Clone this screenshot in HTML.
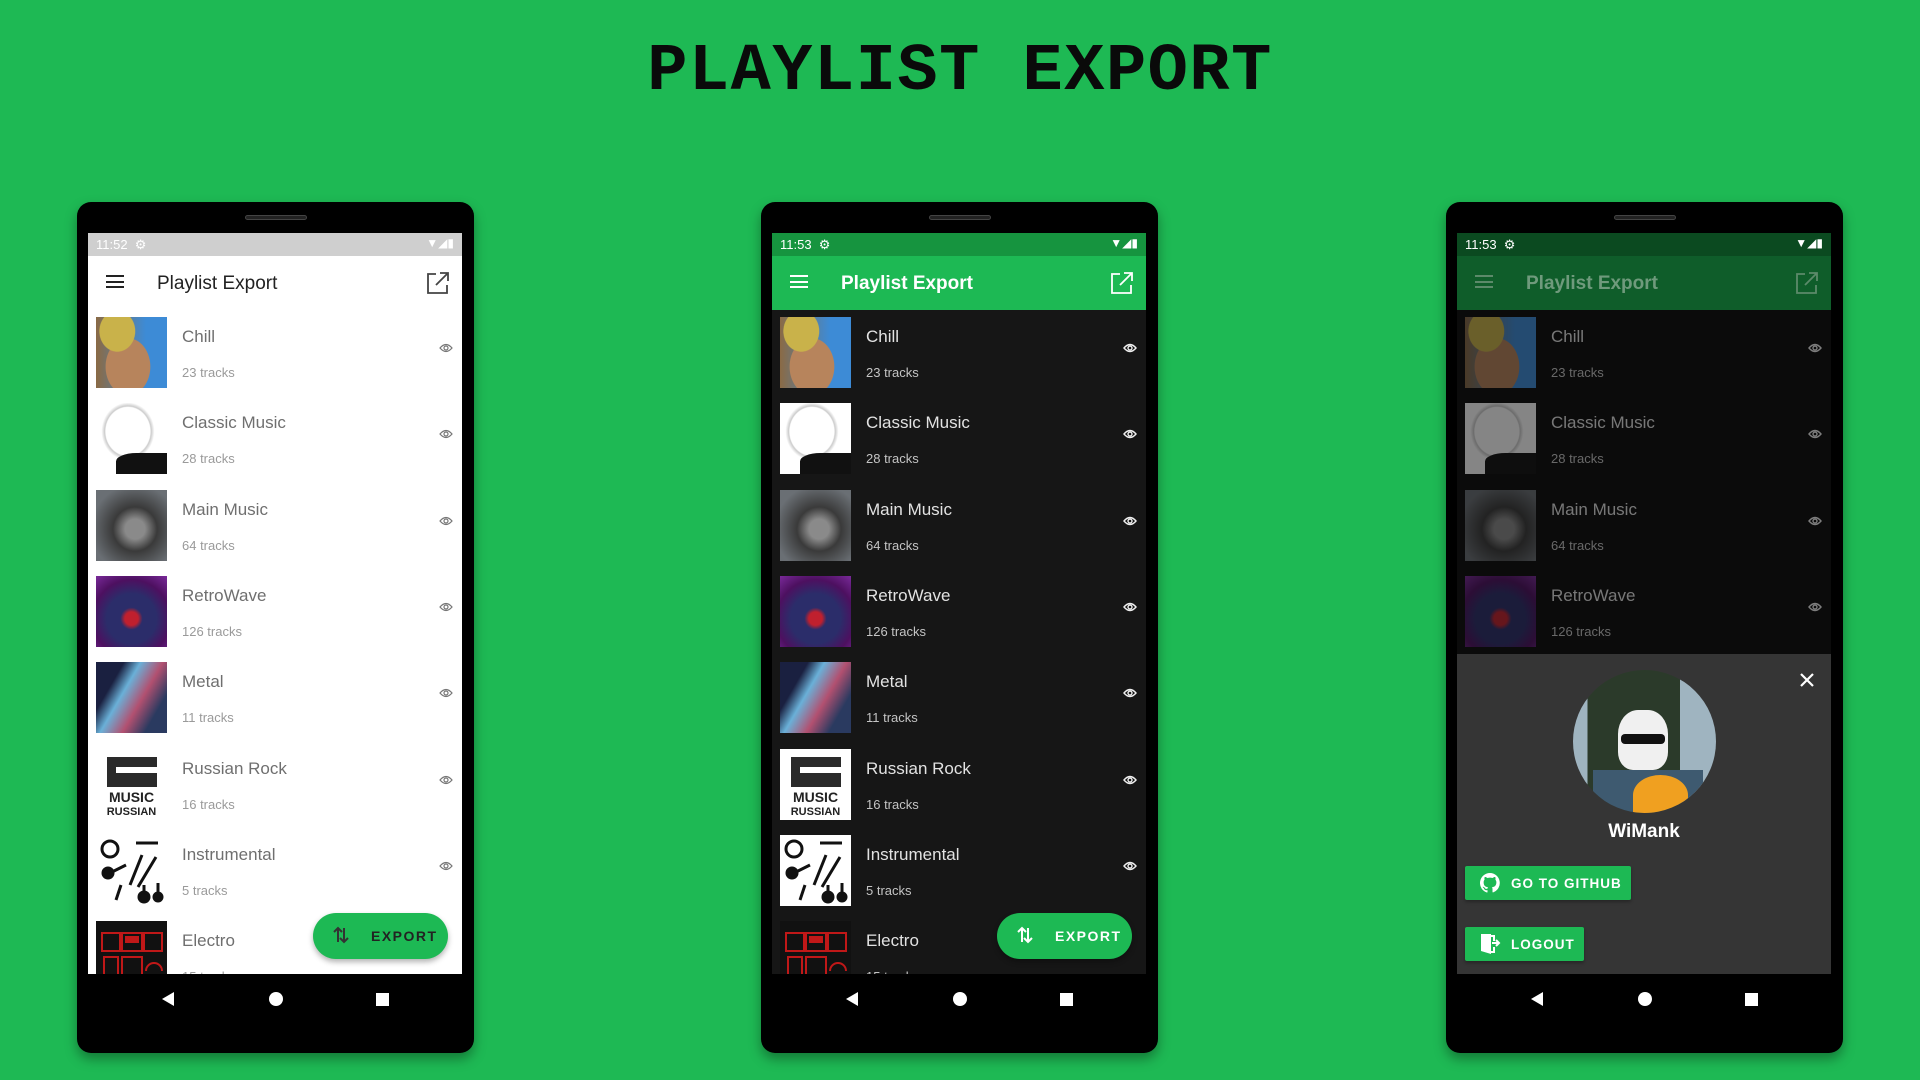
<!DOCTYPE html>
<html><head><meta charset="utf-8"><style>
*{margin:0;padding:0;box-sizing:border-box}
body{width:1920px;height:1080px;background:#1eb954;position:relative;overflow:hidden;font-family:"Liberation Sans",Roboto,sans-serif}
h1{position:absolute;left:0;width:1920px;top:34px;text-align:center;font-family:"Liberation Mono",monospace;font-weight:bold;font-size:67px;color:#0a0a0a;letter-spacing:1.5px}
.ph{position:absolute;top:202px;width:397px;height:851px;background:#000;border-radius:14px;box-shadow:0 6px 12px rgba(0,0,0,.35)}
.spk{position:absolute;left:168px;top:13px;width:62px;height:5px;border-radius:3px;background:#222;border:1px solid #444}
.scr{position:absolute;left:11px;top:31px;width:374px;height:741px;overflow:hidden}
.sb{position:absolute;left:0;top:0;width:374px;height:23px;font-size:13px;color:#fff;padding:4px 8px}
.sb .r{position:absolute;right:8px;top:3px;font-size:12px}
.ab{position:absolute;left:0;top:23px;width:374px;height:54px}
.ab .t{position:absolute;left:69px;top:17px;font-size:19px}
.ham{position:absolute;left:18px;top:19px;width:18px;height:13px;border-top:2px solid;border-bottom:2px solid}
.ham:after{content:"";position:absolute;left:0;top:3.5px;width:18px;border-top:2px solid}
.ex{position:absolute;left:338px;top:15px}
.list{position:absolute;left:0;top:77px;width:374px;height:664px}
.row{position:absolute;left:8px;width:360px;height:71px}
.th{position:absolute;left:0;top:0;width:71px;height:71px;overflow:hidden}
.ti{position:absolute;left:86px;top:10px;font-size:17px}
.tr{position:absolute;left:86px;top:48px;font-size:13px}
.eye{position:absolute;left:343px;top:26px}
.nav{position:absolute;left:11px;top:772px;width:374px;height:48px}
.fab{position:absolute;left:225px;top:680px;width:135px;height:46px;border-radius:23px;background:#1db954;color:#fff;font-weight:bold;font-size:14px;letter-spacing:1.5px;box-shadow:0 3px 6px rgba(0,0,0,.3)}
.fab span{position:absolute;left:58px;top:15px}
.fab svg{position:absolute;left:20px;top:13px}
.light .list{background:#fff}.light .ti{color:#6f6f6f}.light .tr{color:#9a9a9a}
.dark .list{background:#161616}.dark .ti{color:#e2e2e2}.dark .tr{color:#c4c4c4}
.t1{background:radial-gradient(ellipse at 30% 20%,#c9b24a 0 25%,transparent 26%),radial-gradient(ellipse at 45% 70%,#b7845c 0 40%,transparent 41%),linear-gradient(90deg,#8a6a45,#3d8bd6 70%)}
.t2b{background:radial-gradient(ellipse at 45% 40%,#fff 0 40%,#ccc 42%,#fff 48%),linear-gradient(#fff,#fff)}
.t2b:after{content:"";position:absolute;left:20px;top:50px;width:51px;height:21px;background:#111;border-radius:40% 0 0 0}
.t3{background:radial-gradient(circle at 55% 55%,#8a8a8a 0 18%,#3a3a3a 40%,#6a6f74 80%)}
.t4{background:radial-gradient(circle at 50% 60%,#c0202e 0 12%,#2b2d6a 20% 45%,#4d1060 70%,#7a2a9a)}
.t5{background:linear-gradient(120deg,#1a2040 0 25%,#6ab0d8 40%,#b25070 60%,#2a3a60 80%)}
.t6{background:#fff}
.t7{background:#fff}
.t8{background:#111}
</style></head><body>
<h1>PLAYLIST EXPORT</h1>

<div class="ph light" style="left:77px"><div class="spk"></div>
<div class="scr">
<div class="sb" style="background:#cfcfcf">11:52 &nbsp;⚙<span class="r">▼◢▮</span></div>
<div class="ab" style="background:#fff;color:#222"><div class="ham"></div><div class="t">Playlist Export</div>
<svg class="ex" width="24" height="24" viewBox="0 0 24 24" fill="none" stroke="#444" stroke-width="1.8"><path d="M10 3H2v19h19v-8M14 2h8v8M22 2 10 14"/></svg></div>
<div class="list">
<div class="row" style="top:7px"><div class="th t1"></div><div class="ti">Chill</div><div class="tr">23 tracks</div><svg class="eye" width="14" height="10" viewBox="0 0 14 10" fill="none" stroke="#777" stroke-width="1.2"><path d="M1 5Q7-2 13 5Q7 12 1 5Z"/><circle cx="7" cy="5" r="2"/></svg></div>
<div class="row" style="top:93px"><div class="th t2b"></div><div class="ti">Classic Music</div><div class="tr">28 tracks</div><svg class="eye" width="14" height="10" viewBox="0 0 14 10" fill="none" stroke="#777" stroke-width="1.2"><path d="M1 5Q7-2 13 5Q7 12 1 5Z"/><circle cx="7" cy="5" r="2"/></svg></div>
<div class="row" style="top:180px"><div class="th t3"></div><div class="ti">Main Music</div><div class="tr">64 tracks</div><svg class="eye" width="14" height="10" viewBox="0 0 14 10" fill="none" stroke="#777" stroke-width="1.2"><path d="M1 5Q7-2 13 5Q7 12 1 5Z"/><circle cx="7" cy="5" r="2"/></svg></div>
<div class="row" style="top:266px"><div class="th t4"></div><div class="ti">RetroWave</div><div class="tr">126 tracks</div><svg class="eye" width="14" height="10" viewBox="0 0 14 10" fill="none" stroke="#777" stroke-width="1.2"><path d="M1 5Q7-2 13 5Q7 12 1 5Z"/><circle cx="7" cy="5" r="2"/></svg></div>
<div class="row" style="top:352px"><div class="th t5"></div><div class="ti">Metal</div><div class="tr">11 tracks</div><svg class="eye" width="14" height="10" viewBox="0 0 14 10" fill="none" stroke="#777" stroke-width="1.2"><path d="M1 5Q7-2 13 5Q7 12 1 5Z"/><circle cx="7" cy="5" r="2"/></svg></div>
<div class="row" style="top:439px"><div class="th t6"><div style="position:absolute;left:11px;top:8px;width:50px;height:30px;background:#2a2a2a"></div><div style="position:absolute;left:20px;top:18px;width:41px;height:6px;background:#fff"></div><div style="position:absolute;left:0;top:42px;width:71px;text-align:center;font-weight:bold;font-size:14px;line-height:13px;color:#222">MUSIC<br><span style="font-size:11px">RUSSIAN</span></div></div><div class="ti">Russian Rock</div><div class="tr">16 tracks</div><svg class="eye" width="14" height="10" viewBox="0 0 14 10" fill="none" stroke="#777" stroke-width="1.2"><path d="M1 5Q7-2 13 5Q7 12 1 5Z"/><circle cx="7" cy="5" r="2"/></svg></div>
<div class="row" style="top:525px"><div class="th t7"><svg width="71" height="71" stroke="#111" stroke-width="3" fill="#111"><circle cx="14" cy="14" r="8" fill="none"/><path d="M40 8h22M10 40l20-10M46 20l-12 30M60 22L42 52M25 50l-5 15M48 50v18M62 48v18"/><circle cx="12" cy="38" r="5"/><circle cx="48" cy="62" r="5"/><circle cx="62" cy="62" r="4"/></svg></div><div class="ti">Instrumental</div><div class="tr">5 tracks</div><svg class="eye" width="14" height="10" viewBox="0 0 14 10" fill="none" stroke="#777" stroke-width="1.2"><path d="M1 5Q7-2 13 5Q7 12 1 5Z"/><circle cx="7" cy="5" r="2"/></svg></div>
<div class="row" style="top:611px"><div class="th t8"><svg width="71" height="71" fill="none" stroke="#c01818" stroke-width="2"><rect x="6" y="12" width="18" height="18"/><rect x="26" y="12" width="20" height="18"/><rect x="48" y="12" width="18" height="18"/><rect x="8" y="36" width="14" height="22"/><rect x="26" y="36" width="20" height="18"/><path d="M50 50a8 8 0 0116 0"/><rect x="30" y="16" width="12" height="5" fill="#c01818"/></svg></div><div class="ti">Electro</div><div class="tr">15 tracks</div></div>
</div>
<div class="fab"><svg width="16" height="18" fill="none" stroke="#333" stroke-width="2"><path d="M5 16V2M1 6l4-4 4 4M11 2v14M7 12l4 4 4-4"/></svg><span style="color:#222">EXPORT</span></div>
</div>
<div class="nav"><svg width="374" height="48" fill="#fff"><path d="M86 18v14l-12-7z"/><circle cx="188" cy="25" r="7"/><rect x="288" y="19" width="13" height="13"/></svg></div>
</div>

<div class="ph dark" style="left:761px"><div class="spk"></div>
<div class="scr">
<div class="sb" style="background:#16943f">11:53 &nbsp;⚙<span class="r">▼◢▮</span></div>
<div class="ab" style="background:#1db954;color:#fff"><div class="ham"></div><div class="t" style="font-weight:bold">Playlist Export</div>
<svg class="ex" width="24" height="24" viewBox="0 0 24 24" fill="none" stroke="#fff" stroke-width="1.8"><path d="M10 3H2v19h19v-8M14 2h8v8M22 2 10 14"/></svg></div>
<div class="list">
<div class="row" style="top:7px"><div class="th t1"></div><div class="ti">Chill</div><div class="tr">23 tracks</div><svg class="eye" width="14" height="10" viewBox="0 0 14 10" fill="none" stroke="#eee" stroke-width="1.4"><path d="M1 5Q7-2 13 5Q7 12 1 5Z"/><circle cx="7" cy="5" r="2"/></svg></div>
<div class="row" style="top:93px"><div class="th t2b"></div><div class="ti">Classic Music</div><div class="tr">28 tracks</div><svg class="eye" width="14" height="10" viewBox="0 0 14 10" fill="none" stroke="#eee" stroke-width="1.4"><path d="M1 5Q7-2 13 5Q7 12 1 5Z"/><circle cx="7" cy="5" r="2"/></svg></div>
<div class="row" style="top:180px"><div class="th t3"></div><div class="ti">Main Music</div><div class="tr">64 tracks</div><svg class="eye" width="14" height="10" viewBox="0 0 14 10" fill="none" stroke="#eee" stroke-width="1.4"><path d="M1 5Q7-2 13 5Q7 12 1 5Z"/><circle cx="7" cy="5" r="2"/></svg></div>
<div class="row" style="top:266px"><div class="th t4"></div><div class="ti">RetroWave</div><div class="tr">126 tracks</div><svg class="eye" width="14" height="10" viewBox="0 0 14 10" fill="none" stroke="#eee" stroke-width="1.4"><path d="M1 5Q7-2 13 5Q7 12 1 5Z"/><circle cx="7" cy="5" r="2"/></svg></div>
<div class="row" style="top:352px"><div class="th t5"></div><div class="ti">Metal</div><div class="tr">11 tracks</div><svg class="eye" width="14" height="10" viewBox="0 0 14 10" fill="none" stroke="#eee" stroke-width="1.4"><path d="M1 5Q7-2 13 5Q7 12 1 5Z"/><circle cx="7" cy="5" r="2"/></svg></div>
<div class="row" style="top:439px"><div class="th t6"><div style="position:absolute;left:11px;top:8px;width:50px;height:30px;background:#2a2a2a"></div><div style="position:absolute;left:20px;top:18px;width:41px;height:6px;background:#fff"></div><div style="position:absolute;left:0;top:42px;width:71px;text-align:center;font-weight:bold;font-size:14px;line-height:13px;color:#222">MUSIC<br><span style="font-size:11px">RUSSIAN</span></div></div><div class="ti">Russian Rock</div><div class="tr">16 tracks</div><svg class="eye" width="14" height="10" viewBox="0 0 14 10" fill="none" stroke="#eee" stroke-width="1.4"><path d="M1 5Q7-2 13 5Q7 12 1 5Z"/><circle cx="7" cy="5" r="2"/></svg></div>
<div class="row" style="top:525px"><div class="th t7"><svg width="71" height="71" stroke="#111" stroke-width="3" fill="#111"><circle cx="14" cy="14" r="8" fill="none"/><path d="M40 8h22M10 40l20-10M46 20l-12 30M60 22L42 52M25 50l-5 15M48 50v18M62 48v18"/><circle cx="12" cy="38" r="5"/><circle cx="48" cy="62" r="5"/><circle cx="62" cy="62" r="4"/></svg></div><div class="ti">Instrumental</div><div class="tr">5 tracks</div><svg class="eye" width="14" height="10" viewBox="0 0 14 10" fill="none" stroke="#eee" stroke-width="1.4"><path d="M1 5Q7-2 13 5Q7 12 1 5Z"/><circle cx="7" cy="5" r="2"/></svg></div>
<div class="row" style="top:611px"><div class="th t8"><svg width="71" height="71" fill="none" stroke="#c01818" stroke-width="2"><rect x="6" y="12" width="18" height="18"/><rect x="26" y="12" width="20" height="18"/><rect x="48" y="12" width="18" height="18"/><rect x="8" y="36" width="14" height="22"/><rect x="26" y="36" width="20" height="18"/><path d="M50 50a8 8 0 0116 0"/><rect x="30" y="16" width="12" height="5" fill="#c01818"/></svg></div><div class="ti">Electro</div><div class="tr">15 tracks</div></div>
</div>
<div class="fab"><svg width="16" height="18" fill="none" stroke="#fff" stroke-width="2"><path d="M5 16V2M1 6l4-4 4 4M11 2v14M7 12l4 4 4-4"/></svg><span>EXPORT</span></div>
</div>
<div class="nav"><svg width="374" height="48" fill="#fff"><path d="M86 18v14l-12-7z"/><circle cx="188" cy="25" r="7"/><rect x="288" y="19" width="13" height="13"/></svg></div>
</div>

<div class="ph dark" style="left:1446px"><div class="spk"></div>
<div class="scr">
<div class="sb" style="background:#0b4a20">11:53 &nbsp;⚙<span class="r">▼◢▮</span></div>
<div class="ab" style="background:#0f5d2a;color:#8aa"><div class="ham" style="color:#5c8a6a"></div><div class="t" style="font-weight:bold;color:#6f9a7c">Playlist Export</div>
<svg class="ex" width="24" height="24" viewBox="0 0 24 24" fill="none" stroke="#5c8a6a" stroke-width="1.8"><path d="M10 3H2v19h19v-8M14 2h8v8M22 2 10 14"/></svg></div>
<div class="list" style="background:#0b0b0b">
<div class="row" style="top:7px;opacity:.5"><div class="th t1"></div><div class="ti">Chill</div><div class="tr">23 tracks</div><svg class="eye" width="14" height="10" viewBox="0 0 14 10" fill="none" stroke="#eee" stroke-width="1.4"><path d="M1 5Q7-2 13 5Q7 12 1 5Z"/><circle cx="7" cy="5" r="2"/></svg></div>
<div class="row" style="top:93px;opacity:.5"><div class="th t2b"></div><div class="ti">Classic Music</div><div class="tr">28 tracks</div><svg class="eye" width="14" height="10" viewBox="0 0 14 10" fill="none" stroke="#eee" stroke-width="1.4"><path d="M1 5Q7-2 13 5Q7 12 1 5Z"/><circle cx="7" cy="5" r="2"/></svg></div>
<div class="row" style="top:180px;opacity:.5"><div class="th t3"></div><div class="ti">Main Music</div><div class="tr">64 tracks</div><svg class="eye" width="14" height="10" viewBox="0 0 14 10" fill="none" stroke="#eee" stroke-width="1.4"><path d="M1 5Q7-2 13 5Q7 12 1 5Z"/><circle cx="7" cy="5" r="2"/></svg></div>
<div class="row" style="top:266px;opacity:.5"><div class="th t4"></div><div class="ti">RetroWave</div><div class="tr">126 tracks</div><svg class="eye" width="14" height="10" viewBox="0 0 14 10" fill="none" stroke="#eee" stroke-width="1.4"><path d="M1 5Q7-2 13 5Q7 12 1 5Z"/><circle cx="7" cy="5" r="2"/></svg></div>
</div>
<div style="position:absolute;left:0;top:421px;width:374px;height:320px;background:#353535">
<svg style="position:absolute;left:343px;top:19px" width="14" height="14" stroke="#fff" stroke-width="2.2"><path d="M1 1l12 12M13 1L1 13"/></svg>
<div style="position:absolute;left:116px;top:16px;width:143px;height:143px;border-radius:50%;overflow:hidden;background:linear-gradient(90deg,#9fb4c0 0 10%,#2b3a2a 10% 75%,#9fb4c0 75%)">
<div style="position:absolute;left:45px;top:40px;width:50px;height:60px;background:#f0f0f0;border-radius:40% 40% 30% 30%"></div>
<div style="position:absolute;left:48px;top:64px;width:44px;height:10px;background:#111;border-radius:4px"></div>
<div style="position:absolute;left:20px;top:100px;width:110px;height:50px;background:#3e5a70"></div>
<div style="position:absolute;left:60px;top:105px;width:55px;height:40px;background:#f0a020;border-radius:50% 50% 0 0"></div>
</div>
<div style="position:absolute;left:0;width:374px;top:167px;text-align:center;color:#fff;font-weight:bold;font-size:19px">WiMank</div>
<div style="position:absolute;left:8px;top:212px;width:166px;height:34px;background:#1db954;border-radius:2px;color:#fff;font-weight:bold;font-size:13.5px;letter-spacing:1px;box-shadow:0 2px 3px rgba(0,0,0,.3)">
<svg style="position:absolute;left:15px;top:7px" width="20" height="20" viewBox="0 0 16 16" fill="#fff"><path d="M8 0a8 8 0 00-2.5 15.6c.4 0 .5-.2.5-.4v-1.5c-2.2.5-2.7-1-2.7-1-.4-.9-.9-1.2-.9-1.2-.7-.5.1-.5.1-.5.8.1 1.2.8 1.2.8.7 1.3 1.9.9 2.3.7.1-.5.3-.9.5-1.1-1.8-.2-3.6-.9-3.6-4 0-.9.3-1.6.8-2.1-.1-.2-.4-1 .1-2.1 0 0 .7-.2 2.2.8a7.4 7.4 0 014 0c1.5-1 2.2-.8 2.2-.8.4 1.1.2 1.9.1 2.1.5.6.8 1.3.8 2.1 0 3.1-1.9 3.8-3.6 4 .3.3.5.8.5 1.5v2.2c0 .2.1.5.6.4A8 8 0 008 0z"/></svg>
<span style="position:absolute;left:46px;top:10px">GO TO GITHUB</span></div>
<div style="position:absolute;left:8px;top:273px;width:119px;height:34px;background:#1db954;border-radius:2px;color:#fff;font-weight:bold;font-size:13.5px;letter-spacing:1px;box-shadow:0 2px 3px rgba(0,0,0,.3)">
<svg style="position:absolute;left:14px;top:6px" width="24" height="22" fill="#fff"><path d="M2 1h10v20L2 18z"/><path d="M12 3h3v5M15 14v5h-3" fill="none" stroke="#fff" stroke-width="2"/><path d="M13 10h7M17 7l3 3-3 3" fill="none" stroke="#fff" stroke-width="2"/></svg>
<span style="position:absolute;left:46px;top:10px">LOGOUT</span></div>
</div>
</div>
<div class="nav"><svg width="374" height="48" fill="#fff"><path d="M86 18v14l-12-7z"/><circle cx="188" cy="25" r="7"/><rect x="288" y="19" width="13" height="13"/></svg></div>
</div>
</body></html>
